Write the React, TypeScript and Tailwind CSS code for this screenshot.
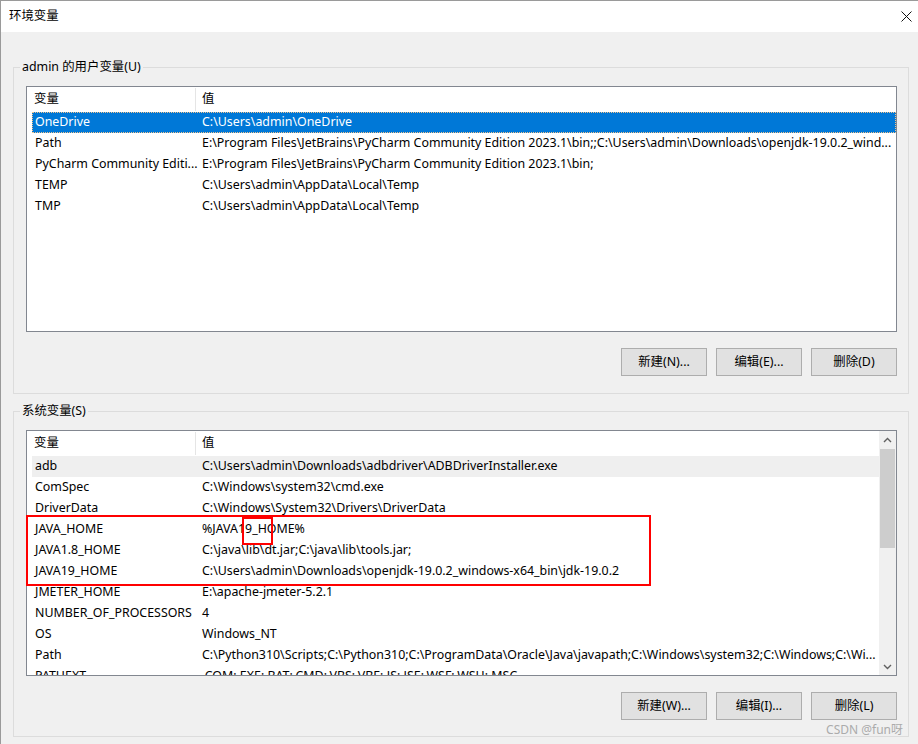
import type { ReactNode } from 'react';

type Row = [string, string];

const userVars: Row[] = [
  ['OneDrive', 'C:\\Users\\admin\\OneDrive'],
  ['Path', 'E:\\Program Files\\JetBrains\\PyCharm Community Edition 2023.1\\bin;;C:\\Users\\admin\\Downloads\\openjdk-19.0.2_wind...'],
  ['PyCharm Community Editi...', 'E:\\Program Files\\JetBrains\\PyCharm Community Edition 2023.1\\bin;'],
  ['TEMP', 'C:\\Users\\admin\\AppData\\Local\\Temp'],
  ['TMP', 'C:\\Users\\admin\\AppData\\Local\\Temp'],
];

const sysVars: Row[] = [
  ['adb', 'C:\\Users\\admin\\Downloads\\adbdriver\\ADBDriverInstaller.exe'],
  ['ComSpec', 'C:\\Windows\\system32\\cmd.exe'],
  ['DriverData', 'C:\\Windows\\System32\\Drivers\\DriverData'],
  ['JAVA_HOME', '%JAVA19_HOME%'],
  ['JAVA1.8_HOME', 'C:\\java\\lib\\dt.jar;C:\\java\\lib\\tools.jar;'],
  ['JAVA19_HOME', 'C:\\Users\\admin\\Downloads\\openjdk-19.0.2_windows-x64_bin\\jdk-19.0.2'],
  ['JMETER_HOME', 'E:\\apache-jmeter-5.2.1'],
  ['NUMBER_OF_PROCESSORS', '4'],
  ['OS', 'Windows_NT'],
  ['Path', 'C:\\Python310\\Scripts;C:\\Python310;C:\\ProgramData\\Oracle\\Java\\javapath;C:\\Windows\\system32;C:\\Windows;C:\\Wi...'],
  ['PATHEXT', '.COM;.EXE;.BAT;.CMD;.VBS;.VBE;.JS;.JSE;.WSF;.WSH;.MSC'],
];

function Header() {
  return (
    <div className="flex h-[25px] shrink-0 bg-white">
      <div className="flex w-[168px] items-center pl-[7px]">变量</div>
      <div className="my-[1px] w-px bg-[#e5e5e5]" />
      <div className="flex flex-1 items-center pl-[6px]">值</div>
    </div>
  );
}

function VarRow({ name, value, state }: { name: string; value: string; state?: 'selected' | 'hover' }) {
  const look =
    state === 'selected'
      ? 'bg-[#0078d7] text-white outline-1 outline-dotted -outline-offset-1 outline-[#f3c48c]'
      : state === 'hover'
        ? 'bg-[#efefef]'
        : '';
  return (
    <div className={`ml-[5px] flex h-[21px] shrink-0 items-center whitespace-nowrap ${look}`}>
      <div className="w-[166px] shrink-0 overflow-hidden pl-[3px]">{name}</div>
      <div className="min-w-0 flex-1 overflow-hidden pl-[4px]">{value}</div>
    </div>
  );
}

function ScrollBar() {
  return (
    <div className="flex w-[17px] shrink-0 flex-col bg-[#f0f0f0]">
      <div className="flex h-[17px] shrink-0 items-center justify-center">
        <svg width="9" height="6" viewBox="0 0 9 6">
          <path d="M1 5 L4.5 1.5 L8 5" stroke="#606060" strokeWidth="1.4" fill="none" />
        </svg>
      </div>
      <div className="mx-[1px] mt-[1px] h-[99px] shrink-0 bg-[#cdcdcd]" />
      <div className="flex-1" />
      <div className="flex h-[17px] shrink-0 items-center justify-center">
        <svg width="9" height="6" viewBox="0 0 9 6">
          <path d="M1 1 L4.5 4.5 L8 1" stroke="#606060" strokeWidth="1.4" fill="none" />
        </svg>
      </div>
    </div>
  );
}

function Btn({ children }: { children: ReactNode }) {
  return (
    <button className="h-[28px] w-[86px] border border-[#adadad] bg-[#e1e1e1] text-black">{children}</button>
  );
}

export default function App() {
  return (
    <div className="relative h-[744px] w-[918px] overflow-hidden border-l border-t border-[#9a9a9a] bg-[#f0f0f0] font-['Noto_Sans','Noto_Sans_CJK_SC',sans-serif] text-[12.4px] text-black">
      {/* title bar */}
      <div className="flex h-[31px] items-center justify-between bg-white pl-[8px] pr-[6px]">
        <span>环境变量</span>
        <svg width="11" height="11" viewBox="0 0 11 11">
          <path d="M0.5 0.5 L10.5 10.5 M10.5 0.5 L0.5 10.5" stroke="#111" strokeWidth="1" />
        </svg>
      </div>

      <div className="pl-[12px] pr-[9px] pt-[27px]">
        {/* user vars */}
        <fieldset className="min-w-0 border border-[#dcdcdc] pb-[17px] pl-[12px] pr-[11px] pt-[11px]">
          <legend className="-ml-[6px] px-[2px] leading-[16px]">admin 的用户变量(U)</legend>
          <div className="flex h-[246px] flex-col overflow-hidden border border-[#828790] bg-white">
            <Header />
            {userVars.map(([n, v], i) => (
              <VarRow key={n} name={n} value={v} state={i === 0 ? 'selected' : undefined} />
            ))}
          </div>
          <div className="mt-[16px] flex justify-end gap-[9px]">
            <Btn>新建(N)...</Btn>
            <Btn>编辑(E)...</Btn>
            <Btn>删除(D)</Btn>
          </div>
        </fieldset>

        {/* system vars */}
        <fieldset className="mt-[9px] min-w-0 border border-[#dcdcdc] pb-[16px] pl-[12px] pr-[11px] pt-[11px]">
          <legend className="-ml-[6px] px-[2px] leading-[16px]">系统变量(S)</legend>
          <div className="relative">
            <div className="flex h-[246px] overflow-hidden border border-[#828790] bg-white">
              <div className="flex min-w-0 flex-1 flex-col overflow-hidden">
                <Header />
                {sysVars.map(([n, v], i) => (
                  <VarRow key={n} name={n} value={v} state={i === 0 ? 'hover' : undefined} />
                ))}
              </div>
              <ScrollBar />
            </div>
            {/* annotation boxes */}
            <div className="absolute left-0 top-[85px] h-[71px] w-[625px] border-2 border-[#ff0000]" />
            <div className="absolute left-[216px] top-[87px] h-[28px] w-[31px] border-2 border-[#ff0000]" />
          </div>
          <div className="mt-[16px] flex justify-end gap-[9px]">
            <Btn>新建(W)...</Btn>
            <Btn>编辑(I)...</Btn>
            <Btn>删除(L)</Btn>
          </div>
        </fieldset>
      </div>

      <div className="absolute bottom-[6px] right-[15px] text-[12px] leading-[16px] text-[#ababab]">CSDN @fun呀</div>
    </div>
  );
}
